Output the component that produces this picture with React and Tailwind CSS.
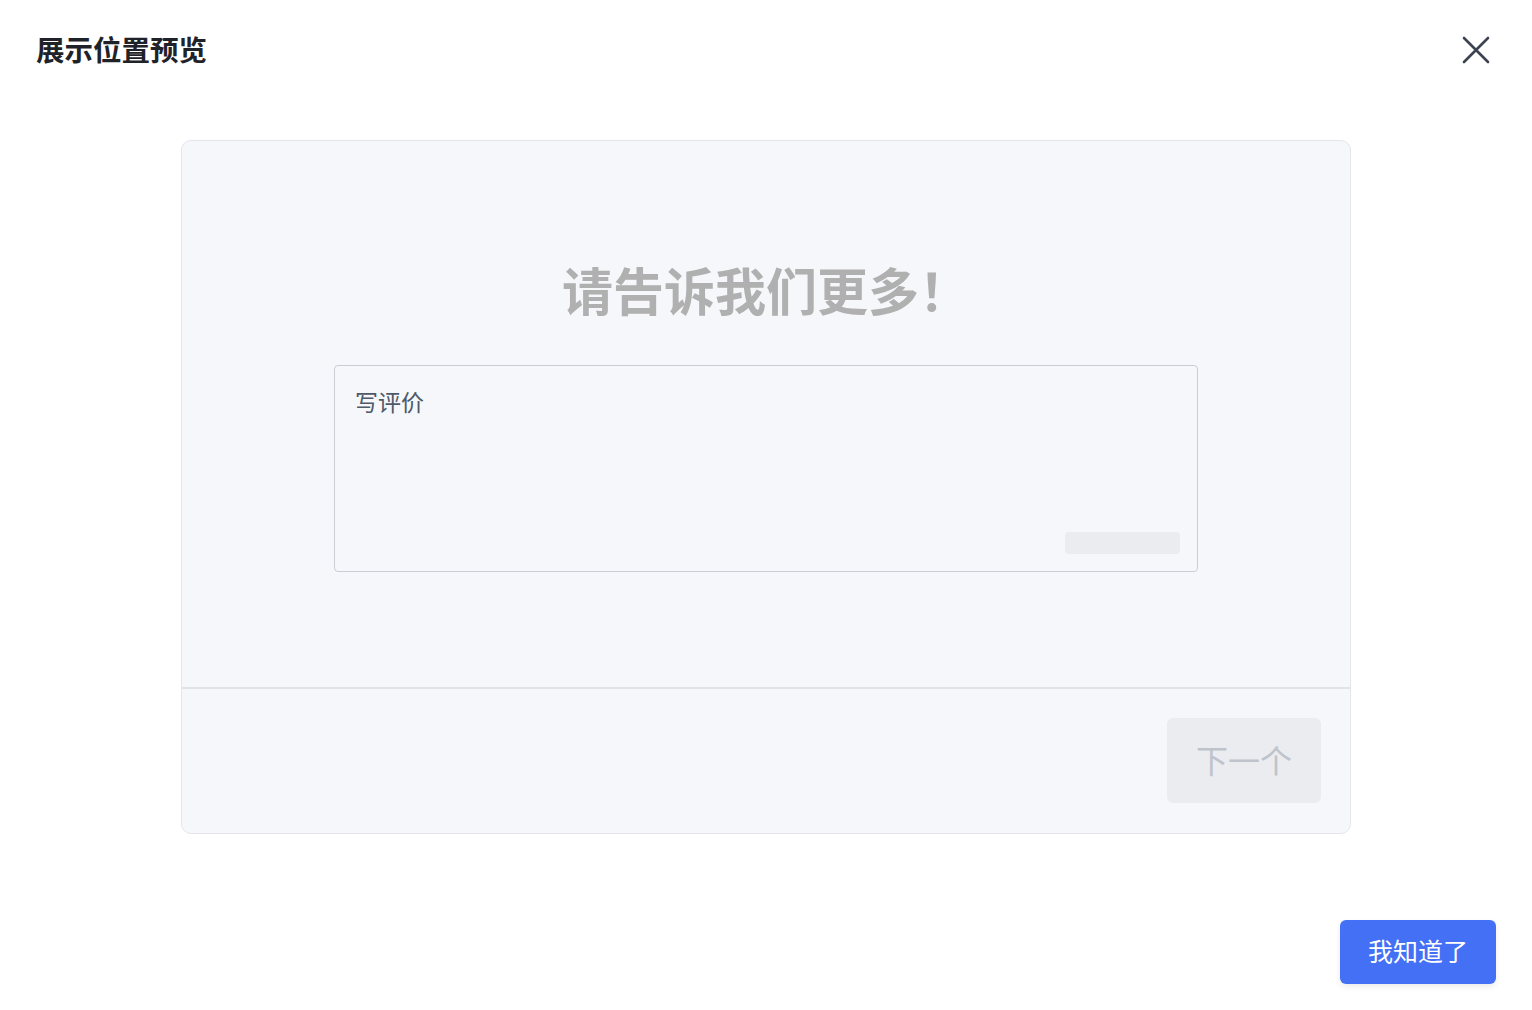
const font = { fontFamily: '"Noto Sans", "Noto Sans CJK SC", sans-serif' };

function CloseIcon() {
  return (
    <svg width="28" height="28" viewBox="0 0 28 28" fill="none" stroke="currentColor" strokeWidth="2.6" strokeLinecap="round">
      <path d="M2 2 L26 26 M26 2 L2 26" />
    </svg>
  );
}

export default function App() {
  return (
    <div className="w-full h-[1010px] bg-white flex flex-col" style={font}>
      {/* header */}
      <div className="flex items-center justify-between pl-9 pr-[42px] pt-[30px] h-[70px]">
        <h1 className="text-[28.5px] leading-[40px] font-bold text-[#1f2329]">展示位置预览</h1>
        <button className="w-7 h-7 flex items-center justify-center text-[#3d4451]">
          <CloseIcon />
        </button>
      </div>

      {/* preview card */}
      <div className="mx-auto mt-[70px] w-[1170px] h-[694px] rounded-[10px] border border-[#e5e6eb] bg-[#f6f7fb] flex flex-col overflow-hidden">
        <div className="h-[546px] flex flex-col items-center">
          <h2 className="mt-[121px] text-[51px] leading-[58px] font-bold text-[#b0b0b0]">
            请告诉我们更多！
          </h2>
          <div className="mt-[45px] w-[864px] h-[207px] rounded-[4px] border border-[#c9cdd4] flex flex-col">
            <div className="pl-[20px] pt-[21px] text-[23px] leading-[30px] text-[#4e5969]">写评价</div>
            <div className="mt-auto mb-[17px] mr-[17px] self-end w-[115px] h-[22px] rounded-[4px] bg-[#ebecf0]" />
          </div>
        </div>
        <div className="h-[2px] bg-[#e2e3e6]" />
        <div className="flex-1 flex justify-end items-start pt-[29px] pr-[29px]">
          <button className="w-[154px] h-[85px] rounded-[6px] bg-[#ebecf0] text-[32px] text-[#bec3cc]">
            下一个
          </button>
        </div>
      </div>

      {/* footer */}
      <div className="flex justify-end pr-[36px] mt-[86px]">
        <button className="w-[156px] h-[64px] rounded-[6px] bg-[#4370f4] text-white text-[25px] shadow-[0_3px_6px_rgba(0,0,0,0.08)]">
          我知道了
        </button>
      </div>
    </div>
  );
}
